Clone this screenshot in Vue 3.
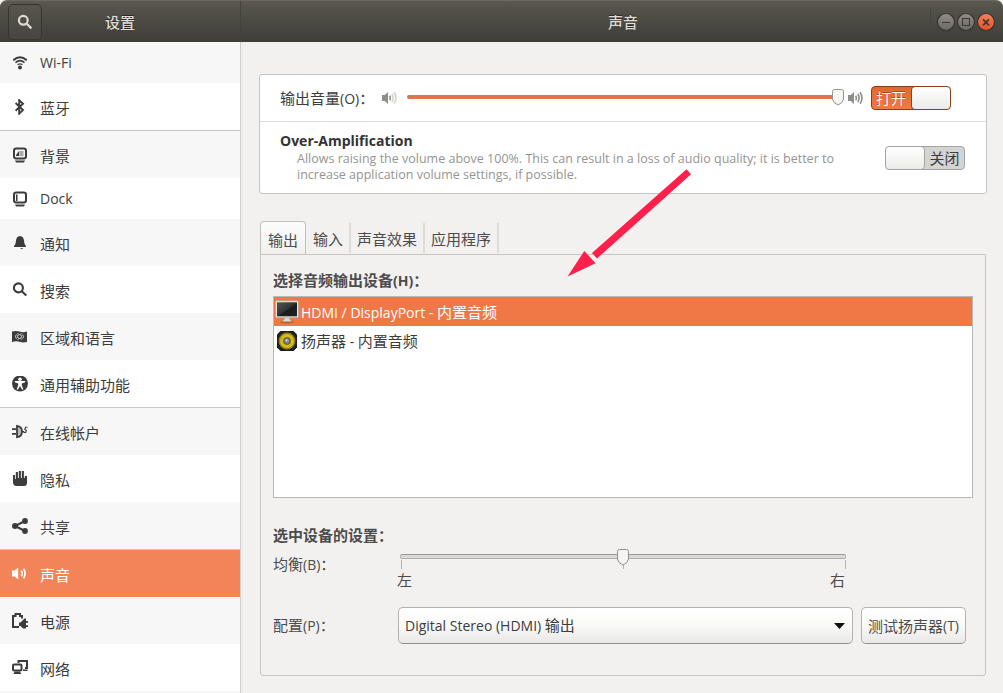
<script setup>
const items = [
  { icon: 'wifi', label: 'Wi-Fi', latin: true },
  { icon: 'bluetooth', label: '蓝牙' },
  { icon: 'background', label: '背景', sep: true },
  { icon: 'dock', label: 'Dock', latin: true },
  { icon: 'bell', label: '通知' },
  { icon: 'search', label: '搜索' },
  { icon: 'flag', label: '区域和语言' },
  { icon: 'access', label: '通用辅助功能' },
  { icon: 'accounts', label: '在线帐户', sep: true },
  { icon: 'hand', label: '隐私' },
  { icon: 'share', label: '共享' },
  { icon: 'sound', label: '声音', sep: true, active: true },
  { icon: 'power', label: '电源' },
  { icon: 'network', label: '网络' },
]
const shades = [1, 0, 1, 0, 1, 0, 1, 0, 1, 0, 1, 0, 1, 0]
const tabs = ['输出', '输入', '声音效果', '应用程序']
</script>

<template>
  <div class="window">
    <header class="titlebar">
      <div class="title-left">
        <div class="search-btn">
          <svg width="16" height="16" viewBox="0 0 16 16" fill="none" stroke="#dfdbd2" stroke-width="2.2">
            <circle cx="6.3" cy="6.3" r="4.4" /><path d="M9.5 9.5 14.4 14.4" />
          </svg>
        </div>
        <span class="title left-name">设置</span>
      </div>
      <div class="title-right">
        <span class="title">声音</span>
        <div class="controls">
          <svg width="60" height="22" viewBox="0 0 60 22">
            <defs>
              <linearGradient id="grey" x1="0" y1="0" x2="0" y2="1"><stop offset="0" stop-color="#8f8d85" /><stop offset="1" stop-color="#6b6962" /></linearGradient>
              <linearGradient id="red" x1="0" y1="0" x2="0" y2="1"><stop offset="0" stop-color="#f6815c" /><stop offset="1" stop-color="#e4511f" /></linearGradient>
            </defs>
            <g stroke="#35342f" stroke-width="1.2">
              <circle cx="10" cy="11" r="8.5" fill="url(#grey)" />
              <circle cx="30" cy="11" r="8.5" fill="url(#grey)" />
              <circle cx="50" cy="11" r="8.5" fill="url(#red)" />
            </g>
            <g stroke="#3b3a35" stroke-width="1.1" fill="none">
              <path d="M6 11.5h8M26.5 7.5h7v7h-7z" />
              <path d="M47 8.3l6 6M53 8.3l-6 6" stroke-width="1.7" />
            </g>
          </svg>
        </div>
      </div>
    </header>

    <div class="body">
      <nav class="sidebar">
        <div v-for="(it, i) in items" :key="it.icon" class="item"
             :class="{ latin: it.latin, sep: it.sep, shade: shades[i], active: it.active }">
          <svg class="ico" width="16" height="16" viewBox="0 0 16 16" fill="currentColor">
            <g v-if="it.icon === 'wifi'" fill="none" stroke="currentColor">
              <path d="M1.2 5.2Q8-.6 14.8 5.2" stroke-width="1.9" />
              <path d="M3.5 7.6Q8 3.8 12.5 7.6" stroke-width="1.6" />
              <path d="M5.6 9.8Q8 7.8 10.4 9.8" stroke-width="1.3" />
              <circle cx="8" cy="12.6" r="2" fill="currentColor" stroke="none" />
            </g>
            <path v-else-if="it.icon === 'bluetooth'" d="M3.6 4 11 11 7.2 14.6V1.2L11 4.8 3.6 11.8" fill="none" stroke="currentColor" stroke-width="1.9" />
            <g v-else-if="it.icon === 'background'">
              <rect x="2" y="1.5" width="12" height="10" rx="2.2" fill="none" stroke="currentColor" stroke-width="2" />
              <path d="M4 9V8l3-4v5z" /><rect x="7.3" y="4" width="4.2" height="5.2" opacity=".4" />
              <path d="M3 13.6h10l-1 1.9H4z" />
            </g>
            <g v-else-if="it.icon === 'dock'">
              <rect x="2" y="1.5" width="12" height="10" rx="2.2" fill="none" stroke="currentColor" stroke-width="2" />
              <rect x="4" y="3.5" width="1.5" height="6.5" /><path d="M3 13.6h10l-1 1.9H4z" />
            </g>
            <g v-else-if="it.icon === 'bell'">
              <path d="M2 12c0-2 1.6-2 1.8-5C4 3 5.4 1 8 1s4 2 4.200 6c.2 3 1.800 3 1.800 5z" /><path d="M8.200 13h3l-1.500 1.200z" />
            </g>
            <g v-else-if="it.icon === 'search'" fill="none" stroke="currentColor" stroke-width="2.1">
              <circle cx="6.400" cy="5.900" r="4.500" /><path d="M9.700 9.200 14.300 13.600" />
            </g>
            <g v-else-if="it.icon === 'flag'">
              <path d="M0 2.600Q4 1.400 7.500 2.600T15 2.600V13Q11 14 7.500 12.800T0 13z" />
              <g fill="none" stroke="#f7f7f7" stroke-width=".8"><circle cx="7.500" cy="7.500" r="2" /><path d="M4.300 5.500Q2.800 7.500 4.300 9.700M10.700 5.500Q12.200 7.500 10.700 9.700M5.400 10.300h1M8.700 10.300h1M5.400 4.800h1M8.700 4.800h1" /></g>
            </g>
            <g v-else-if="it.icon === 'access'">
              <circle cx="8" cy="7.500" r="8" />
              <g fill="#fff"><circle cx="8" cy="3.300" r="1.800" /><path d="M2.800 5h10.400v1.200L9.800 7.400v1.800l1.600 4.300H10L8 10l-2 3.500H4.600l1.600-4.300V7.400L2.800 6.200z" /></g>
            </g>
            <g v-else-if="it.icon === 'accounts'">
              <path d="M0 4.200h4v1.800H0zM0 9h4v1.800H0z" />
              <path d="M5 1.800Q10 2.300 10 7.500T5 13.200z" fill="#bbb" stroke="currentColor" stroke-width="1.800" /><path d="M10 7h2v1.200h-2z" />
              <path d="M15.500 3.300h-2l-.7 2.200 1.500.7-.6 2.200h-2.200" fill="none" stroke="currentColor" stroke-width="1.100" />
            </g>
            <path v-else-if="it.icon === 'hand'" d="M1 4h2v4h.8V1h2.100v6h.9V0h2.100v7h.9V0h2.100v7h.9V5H15v6.500Q15 15 12 15H4.500Q1 15 1 11z" />
            <g v-else-if="it.icon === 'share'">
              <circle cx="3" cy="8" r="3" /><circle cx="13" cy="3" r="2.900" /><circle cx="13" cy="13" r="2.900" />
              <path d="M13 3 3 8l10 5" fill="none" stroke="currentColor" stroke-width="2" />
            </g>
            <g v-else-if="it.icon === 'sound'">
              <path d="M0 4.500h2.700L6.200 1.500v12L2.700 10.500H0z" />
              <path d="M9.200 4.700q2 2.800 0 5.600M11.600 2.800q3 4.700 0 9.400" fill="none" stroke="currentColor" stroke-width="1.700" />
            </g>
            <g v-else-if="it.icon === 'power'">
              <path d="M7 14H1V3h2.500V1H8v2h2v2.500" fill="none" stroke="currentColor" stroke-width="2" />
              <path d="M12.500 5.500h1.500V8h2v1.800h-2v2.400h2V14h-2v1.500h-3L8.500 13H7V9.500h1.500z" />
            </g>
            <g v-else>
              <path d="M6.500 3V1H15v7h-2" fill="none" stroke="currentColor" stroke-width="2" /><path d="M11 9.500h4.500V11H11z" />
              <rect x="1" y="4.500" width="8.500" height="6" rx="1" fill="none" stroke="currentColor" stroke-width="2" />
              <path d="M2.800 11.500h5l1.500 2.500H1.300z" />
            </g>
          </svg>
          <span :class="{ en: it.latin }">{{ it.label }}</span>
        </div>
        <div class="item rest"></div>
      </nav>

      <main class="main">
        <section class="card">
          <div class="volume">
            <span class="vol-label">输出音量<span class="en">(O)</span>：</span>
            <svg class="spk-low" width="16" height="16" viewBox="0 0 16 16">
              <path d="M0 5h2.800L6 2v12l-3.200-3H0z" fill="#8f8e89" />
              <path d="M7.600 5.700q1.600 2.300 0 4.600" fill="none" stroke="#8f8e89" stroke-width="1.500" />
              <path d="M9.800 4q2.500 4 0 8M12 2.200q4 5.800 0 11.600" fill="none" stroke="#d5d4d2" stroke-width="1.700" />
            </svg>
            <div class="vtrack">
              <svg class="thumb" width="12" height="17" viewBox="0 0 12 17"><path d="M.5 2.500Q.5.500 2.500.500h7q2 0 2 2v7.500Q11 14 6 16 1 14 .5 10z" fill="#f4f4f3" stroke="#92918d" /></svg>
            </div>
            <svg class="spk-high" width="16" height="16" viewBox="0 0 16 16">
              <path d="M0 5h2.800L6 2v12l-3.200-3H0z" fill="#8f8e89" />
              <path d="M7.600 5.700q1.600 2.300 0 4.600M9.800 4q2.500 4 0 8M12 2.200q4 5.800 0 11.600" fill="none" stroke="#8f8e89" stroke-width="1.600" />
            </svg>
            <div class="switch on"><span>打开</span><i></i></div>
          </div>
          <div class="amp">
            <div class="amp-text">
              <div class="amp-title">Over-Amplification</div>
              <p class="amp-desc"><span class="l1">Allows raising the volume above 100%. This can result in a loss of audio quality; it is better to</span><br><span class="l2">increase application volume settings, if possible.</span></p>
            </div>
            <div class="switch off"><i></i><span>关闭</span></div>
          </div>
        </section>

        <div class="tabs">
          <div v-for="(t, i) in tabs" :key="t" class="tab" :class="{ current: i === 0 }">{{ t }}</div>
        </div>
        <section class="page">
          <h3 class="head">选择音频输出设备<span class="en">(H)</span>：</h3>
          <div class="list">
            <div class="dev selected">
              <svg width="24" height="24" viewBox="0 0 24 24">
                <defs><linearGradient id="scr" x1="0" y1="0" x2="1" y2="1"><stop offset="0" stop-color="#555" /><stop offset=".5" stop-color="#333" /><stop offset=".55" stop-color="#1c1c1c" /><stop offset="1" stop-color="#222" /></linearGradient></defs>
                <ellipse cx="12" cy="22" rx="7" ry="1.500" fill="#8a5236" opacity=".6" />
                <path d="M9.500 17h5v3l3 1.500h-11l3-1.500z" fill="#ddd" />
                <rect x=".5" y=".8" width="23" height="17" rx="1" fill="#e6e6e4" stroke="#a9a8a5" stroke-width=".8" />
                <rect x="2" y="2.300" width="20" height="14" fill="url(#scr)" />
              </svg>
              <span class="hdmi"><span class="en">HDMI / DisplayPort - </span>内置音频</span>
            </div>
            <div class="dev">
              <svg width="24" height="24" viewBox="0 0 24 24">
                <path d="M5.500 2h13L22 5.500v13L18.500 22h-13L2 18.500v-13z" fill="#1b1b1d" />
                <circle cx="12" cy="12" r="10" fill="#252528" /><circle cx="12" cy="12" r="8.400" fill="#93810d" />
                <circle cx="12" cy="12" r="7" fill="#d5bd18" /><circle cx="12" cy="12" r="3.800" fill="#57502b" />
                <circle cx="12" cy="12" r="2.700" fill="#8a8a8c" /><circle cx="11.500" cy="11.300" r="1" fill="#ddd" />
              </svg>
              <span>扬声器<span class="en"> - </span>内置音频</span>
            </div>
          </div>
          <h3 class="head second">选中设备的设置：</h3>
          <div class="balance">
            <span class="field">均衡<span class="en">(B)</span>：</span>
            <div class="scale">
              <div class="btrack">
                <svg class="thumb" width="12" height="17" viewBox="0 0 12 17"><path d="M.5 2.500Q.5.500 2.500.500h7q2 0 2 2v7.500Q11 14 6 16 1 14 .5 10z" fill="#f4f4f3" stroke="#92918d" /></svg>
              </div>
              <div class="ticks"><i></i><i></i><i></i></div>
              <div class="marks"><span>左</span><span>右</span></div>
            </div>
          </div>
          <div class="profile">
            <span class="field">配置<span class="en">(P)</span>：</span>
            <div class="combo">
              <span><span class="en combo-en">Digital Stereo (HDMI) </span>输出</span>
              <svg width="11" height="6" viewBox="0 0 11 6"><path d="M0 0h11L5.500 6z" /></svg>
            </div>
            <div class="button">测试扬声器<span class="en">(T)</span></div>
          </div>
        </section>
      </main>
    </div>

    <svg class="pointer" width="124" height="110" viewBox="0 0 124 110" fill="#ff1f4b">
      <path d="M119.500 1.300 124 6.200 30 90.500 25 85z" />
      <path d="M.5 108.500 17.300 83 28.600 95.300z" />
    </svg>
  </div>
</template>

<style>
html, body { margin: 0; overflow: hidden; background: #fff; }
</style>

<style scoped>
.window {
  position: relative; width: 1003px; height: 693px; overflow: hidden;
  display: flex; flex-direction: column; background: #f2f1f0; color: #4c4c4c;
  font: 15px/22px "Noto Sans CJK SC", sans-serif;
}
.window * { box-sizing: border-box; }
.en { font-family: "Open Sans", "Noto Sans", sans-serif; font-size: 14px; white-space: pre; }
.titlebar {
  flex: none; display: flex; height: 42px; color: #dfdbd2; font-weight: 500;
  background: linear-gradient(#5c5a50, #56544b 10%, #3e3d38);
  border-radius: 7px 7px 0 0; border-top: 1px solid #6b695f;
  text-shadow: 0 -1px #2c2b28;
}
.title-left { width: 241px; display: flex; align-items: center; border-right: 1px solid #43423b; padding-left: 8px; }
.search-btn {
  width: 34px; height: 36px; display: flex; align-items: center; justify-content: center;
  border: 1px solid #35342f; border-radius: 5px; background: linear-gradient(#57554c, #47463f);
}
.left-name { margin-left: 63px; }
.title-right { flex: 1; display: flex; align-items: center; justify-content: space-between; padding: 0 7px 0 367px; }
.controls { height: 28px; display: flex; align-items: center; border-left: 1px solid #45443d; padding-left: 5px; }
.body { flex: 1; display: flex; min-height: 0; }
.sidebar { width: 243px; border-right: 2px solid #eeedec; box-shadow: inset -1px 0 #d0cfcd; padding-right: 1px; overflow: hidden; background: #fff; color: #3c3c3c; }
.item { height: 47px; display: flex; align-items: center; padding-left: 12px; gap: 12px; padding-bottom: 0; }
.item > span { position: relative; top: 1px; }
.item.latin { height: 41px; }
.item.latin > span { top: 0; }
.item.sep { height: 48px; border-top: 1px solid #c7c7c6; }
.item.shade, .rest { background: #f7f7f7; }
.item.active { background: #f38458; color: #fff; }
.main { flex: 1; padding: 32px 16px 0 16px; }
.card { height: 120px; border: 1px solid #c6c5c3; border-radius: 3px; background: #fff; }
.volume { height: 47px; display: flex; align-items: center; border-bottom: 1px solid #dcdbda; padding-left: 20px; }
.vol-label { width: 102px; white-space: nowrap; color: #3c3c3c; }
.vtrack { position: relative; width: 435px; height: 4px; margin: -2px 6px 0 9px; background: #df744d; border-top: 1px solid #a48a7e; border-radius: 2px; }
.thumb { position: absolute; top: -7px; right: -2px; }
.switch { width: 80px; height: 24px; border-radius: 4px; border: 1px solid #8d3c1a; display: flex; align-items: center; overflow: hidden; line-height: 22px; }
.switch span { width: 40px; text-align: center; padding-right: 2px; }
.switch i { width: 40px; height: 24px; margin: -1px; border: 1px solid #8c3f22; border-radius: 4px; background: linear-gradient(#fff, #ebebea); }
.switch.on { margin-left: 7px; background: linear-gradient(#e5652f, #f17a47); color: #fff; text-shadow: 0 -1px #a84a20; }
.switch.off { background: #d4d4d3; border-color: #a5a4a2; color: #3c3c3c; }
.switch.off i { border-color: #a5a4a2; }
.switch.off span { padding: 0 0 0 1px; }
.amp { height: 71px; display: flex; align-items: center; justify-content: space-between; padding: 0 21px 0 20px; }
.amp-text { font-family: "Open Sans", "Noto Sans", sans-serif; padding-bottom: 1px; }
.amp-title { font-weight: 700; font-size: 14px; line-height: 20px; color: #333; }
.amp-desc { margin: 0 0 0 17px; font-size: 12.500px; line-height: 16px; color: #96948f; white-space: nowrap; }
.tabs { display: flex; align-items: flex-end; height: 60px; padding-left: 1px; }
.tab { height: 30px; padding: 5px 6px; border-right: 2px solid #dddcda; line-height: 22px; margin-bottom: 1px; }
.tab.current { height: 33px; padding: 7px 7px 0; margin-bottom: 0; margin-right: 1px; border: 1px solid #c0bfbc; border-bottom: none; border-radius: 4px 4px 0 0; background: linear-gradient(#fcfcfc, #f2f1f0); }
.page { height: 422px; margin: 0 1px; border: 1px solid #c6c5c3; border-radius: 0 0 3px 3px; padding: 14px 12px; }
.head { margin: 0; height: 27px; font-size: 15px; font-weight: 700; line-height: 22px; }
.list { height: 202px; border: 1px solid #b9b8b6; background: #fff; color: #3c3c3c; }
.dev { height: 29px; display: flex; align-items: center; gap: 2px; padding-left: 1px; white-space: nowrap; }
.dev > span { position: relative; top: 1px; }
.selected { background: #f07746; color: #fff; }
.second { margin-top: 26px; height: 29px; }
.balance { display: flex; height: 54px; }
.field { width: 125px; flex: none; }
.scale { width: 449px; }
.btrack { position: relative; width: 446px; height: 5px; margin: 1px 0 0 2px; background: #dad9d7; border: 1px solid #b0afad; border-top-color: #999896; border-radius: 2px; }
.btrack .thumb { right: 216px; top: -6px; }
.ticks { display: flex; justify-content: space-between; margin: 1px 0 0 3px; width: 445px; }
.ticks i { width: 1px; height: 9px; background: #b5b4b2; }
.marks { display: flex; justify-content: space-between; line-height: 22px; margin: 0 2px 0 -1px; }
.profile { display: flex; align-items: center; white-space: nowrap; }
.combo, .button { height: 37px; border: 1px solid #b3b2b0; border-bottom-color: #92918f; border-radius: 5px; background: linear-gradient(#fff, #f9f9f8 50%, #e9e8e7); display: flex; align-items: center; }
.combo { width: 455px; justify-content: space-between; padding: 0 7px 0 6px; color: #3c3c3c; }
.combo svg { fill: #111; }
.button { width: 105px; margin-left: 8px; justify-content: center; }
.pointer { position: absolute; left: 567px; top: 168px; }
</style>
